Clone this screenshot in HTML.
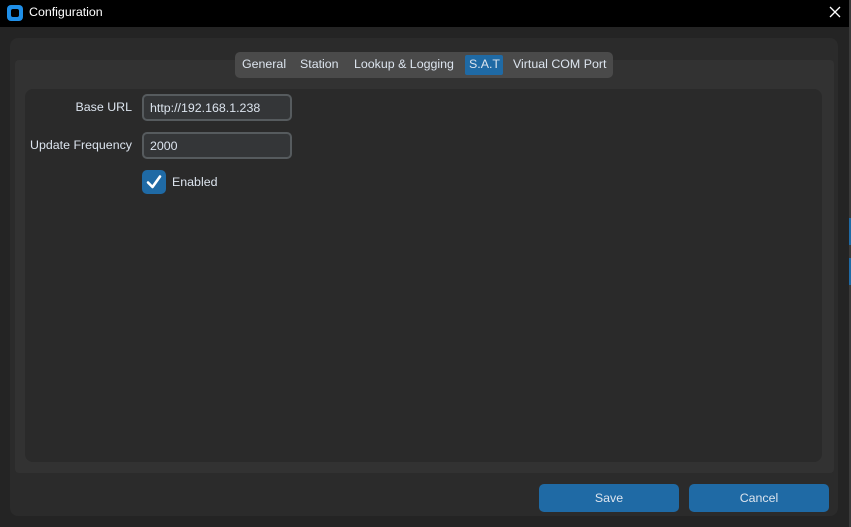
<!DOCTYPE html>
<html><head><meta charset="utf-8"><style>
*{margin:0;padding:0;box-sizing:border-box}
body{width:851px;height:527px;background:#242424;font-family:"Liberation Sans",sans-serif;font-size:12.4px;color:#dce4ee;position:relative;overflow:hidden}
.abs{position:absolute}
.title{left:0;top:0;width:849px;height:27px;background:#000}
.strip{left:849px;top:0;width:2px;height:527px;background:#3a3a3a}
.outer{left:10px;top:38px;width:828px;height:478px;background:#2b2b2b;border-radius:8px}
.tabpane{left:15px;top:60px;width:819px;height:413px;background:#323232;border-radius:4px}
.inner{left:25px;top:89px;width:797px;height:373px;background:#2a2a2a;border-radius:8px}
.tabs{left:235px;top:52px;width:378px;height:26px;background:#4a4a4a;border-radius:5px}
.tab{top:57px}
.sat{left:465px;top:55px;width:38px;height:20px;background:#1f6aa5;border-radius:2px}
.lbl{text-align:right}
.entry{left:142px;width:150px;height:27px;border:2px solid #565b5e;background:#343638;border-radius:5px;padding:5px 0 0 6px}
.cb{left:142px;top:170px;width:24px;height:24px;background:#1f6aa5;border-radius:5px}
.btn{top:484px;width:140px;height:28px;background:#1f6aa5;border-radius:5px;text-align:center;line-height:28px}
</style></head><body>
<div class="abs title"></div>
<div class="abs" style="left:7px;top:5px;width:16px;height:16px;background:#1f8fe8;border-radius:4px"></div>
<div class="abs" style="left:11px;top:9px;width:8px;height:8px;background:#000;border-radius:2px"></div>
<div class="abs" style="left:29px;top:5px;color:#fff">Configuration</div>
<svg class="abs" style="left:828px;top:5px" width="14" height="14"><path d="M2 2L12 12M12 2L2 12" stroke="#fff" stroke-width="1.3"/></svg>
<div class="abs strip"></div>
<div class="abs" style="left:849px;top:218px;width:2px;height:27px;background:#1f6aa5"></div>
<div class="abs" style="left:849px;top:258px;width:2px;height:27px;background:#1f6aa5"></div>
<div class="abs outer"></div>
<div class="abs tabpane"></div>
<div class="abs inner"></div>
<div class="abs tabs"></div>
<div class="abs sat"></div>
<div class="abs tab" style="left:242px">General</div>
<div class="abs tab" style="left:300px">Station</div>
<div class="abs tab" style="left:354px">Lookup &amp; Logging</div>
<div class="abs tab" style="left:469px">S.A.T</div>
<div class="abs tab" style="left:513px">Virtual COM Port</div>
<div class="abs lbl" style="left:20px;width:112px;top:100px">Base URL</div>
<div class="abs lbl" style="left:20px;width:112px;top:138px">Update Frequency</div>
<div class="abs entry" style="top:94px">http://192.168.1.238</div>
<div class="abs entry" style="top:132px">2000</div>
<div class="abs cb"></div>
<svg class="abs" style="left:142px;top:170px" width="24" height="24"><path d="M6 12.5L10.5 17L18 6.5" stroke="#fff" stroke-width="2.6" fill="none" stroke-linecap="round" stroke-linejoin="round"/></svg>
<div class="abs" style="left:172px;top:175px">Enabled</div>
<div class="abs btn" style="left:539px">Save</div>
<div class="abs btn" style="left:689px">Cancel</div>
</body></html>
